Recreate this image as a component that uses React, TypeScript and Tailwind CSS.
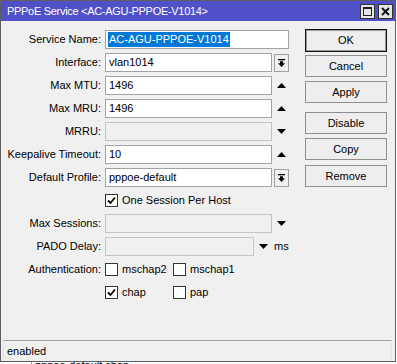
import React from "react";

const font = { fontFamily: '"Liberation Sans", Arial, sans-serif' };

function Up() {
  return (
    <svg width="9" height="5" viewBox="0 0 9 5" className="block">
      <path d="M0 5 L4.5 0 L9 5 Z" fill="#000" />
    </svg>
  );
}
function Down() {
  return (
    <svg width="9" height="5" viewBox="0 0 9 5" className="block">
      <path d="M0 0 L9 0 L4.5 5 Z" fill="#000" />
    </svg>
  );
}

function DropBtn() {
  return (
    <div className="ml-[2px] w-[15px] h-[18px] border border-[#a0a0a0] bg-[#f0f0f0] flex items-center justify-center">
      <svg width="7" height="8" viewBox="0 0 7 8" className="block">
        <rect x="0" y="0" width="7" height="1.3" fill="#000" />
        <path d="M2 2.3 H5 V4.3 H7 L3.5 8 L0 4.3 H2 Z" fill="#000" />
      </svg>
    </div>
  );
}

function Check({ checked }: { checked?: boolean }) {
  return (
    <div className="w-[13px] h-[13px] border border-[#333] bg-white flex items-center justify-center shrink-0">
      {checked && (
        <svg width="9" height="9" viewBox="0 0 9 9" className="block">
          <path d="M1 4.5 L3.5 7 L8 1.5" stroke="#000" strokeWidth="1.8" fill="none" />
        </svg>
      )}
    </div>
  );
}

function Row({ label, children }: { label?: string; children?: React.ReactNode }) {
  return (
    <div className="flex items-center h-[23px]">
      <div className="w-[100px] text-right whitespace-nowrap">{label}</div>
      <div className="ml-[4px] flex items-center">{children}</div>
    </div>
  );
}

function Input({ w, value, disabled, selected }: { w: number; value?: string; disabled?: boolean; selected?: boolean }) {
  const widthCls = w === 184 ? "w-[184px]" : w === 167 ? "w-[167px]" : "w-[149px]";
  return (
    <div
      className={`${widthCls} h-[19px] border flex items-center pl-[2px] whitespace-nowrap overflow-hidden ${
        disabled ? "bg-[#f0f0f0] border-[#c4c4c4]" : "bg-white border-[#a3a3a3]"
      }`}
    >
      {selected ? <span className="bg-[#0078d7] text-white px-[1px] leading-[15px]">{value}</span> : <span className="pl-[1px]">{value}</span>}
    </div>
  );
}

function ArrowSlot({ up, down }: { up?: boolean; down?: boolean }) {
  return (
    <div className="w-[18px] flex items-center justify-center">
      {up && <Up />}
      {down && <Down />}
    </div>
  );
}

function Btn({ label, def, cls }: { label: string; def?: boolean; cls: string }) {
  return (
    <div
      className={`w-[82px] flex items-center justify-center ${cls} ${
        def ? "border border-[#111] shadow-[inset_0_0_0_1px_#9a9a9a]" : "border border-[#8f8f8f]"
      } bg-[#eeeeee]`}
    >
      {label}
    </div>
  );
}

export default function App() {
  return (
    <div className="w-[397px] h-[364px] bg-white overflow-hidden text-[11px] text-black" style={font}>
      <div className="w-[396px] h-[362px] border border-[#5f5f5f] flex flex-col bg-[#f0f0f0]">
        {/* title bar */}
        <div className="h-[20px] bg-[#5050c8] flex items-center justify-between shrink-0">
          <div className="pl-[6px] text-white text-[11px] tracking-[-0.3px] whitespace-nowrap">PPPoE Service &lt;AC-AGU-PPPOE-V1014&gt;</div>
          <div className="flex items-center gap-[3px] pr-[2px]">
            <div className="w-[15px] h-[15px] border border-[#333] bg-[#e6e6e6] flex items-center justify-center">
              <div className="w-[9px] h-[9px] border border-[#222] border-t-2" />
            </div>
            <div className="w-[15px] h-[15px] border border-[#333] bg-[#e6e6e6] flex items-center justify-center">
              <svg width="9" height="9" viewBox="0 0 9 9" className="block">
                <path d="M1 1 L8 8 M8 1 L1 8" stroke="#111" strokeWidth="2" />
              </svg>
            </div>
          </div>
        </div>

        {/* body */}
        <div className="flex-1 flex">
          <div className="pt-[7px] w-[304px]">
            <Row label="Service Name:">
              <Input w={184} value="AC-AGU-PPPOE-V1014" selected />
            </Row>
            <Row label="Interface:">
              <Input w={167} value="vlan1014" />
              <DropBtn />
            </Row>
            <Row label="Max MTU:">
              <Input w={167} value="1496" />
              <ArrowSlot up />
            </Row>
            <Row label="Max MRU:">
              <Input w={167} value="1496" />
              <ArrowSlot up />
            </Row>
            <Row label="MRRU:">
              <Input w={167} disabled />
              <ArrowSlot down />
            </Row>
            <Row label="Keepalive Timeout:">
              <Input w={167} value="10" />
              <ArrowSlot up />
            </Row>
            <Row label="Default Profile:">
              <Input w={167} value="pppoe-default" />
              <DropBtn />
            </Row>
            <Row>
              <Check checked />
              <span className="ml-[4px]">One Session Per Host</span>
            </Row>
            <Row label="Max Sessions:">
              <Input w={167} disabled />
              <ArrowSlot down />
            </Row>
            <Row label="PADO Delay:">
              <Input w={149} disabled />
              <ArrowSlot down />
              <span className="ml-[2px]">ms</span>
            </Row>
            <Row label="Authentication:">
              <div className="w-[68px] flex items-center">
                <Check />
                <span className="ml-[4px]">mschap2</span>
              </div>
              <div className="flex items-center">
                <Check />
                <span className="ml-[4px]">mschap1</span>
              </div>
            </Row>
            <Row>
              <div className="w-[68px] flex items-center">
                <Check checked />
                <span className="ml-[4px]">chap</span>
              </div>
              <div className="flex items-center">
                <Check />
                <span className="ml-[4px]">pap</span>
              </div>
            </Row>
          </div>
          <div className="pt-[8px] flex flex-col">
            <Btn label="OK" def cls="h-[23px]" />
            <Btn label="Cancel" cls="h-[22px] mt-[3px]" />
            <Btn label="Apply" cls="h-[22px] mt-[4px]" />
            <Btn label="Disable" cls="h-[22px] mt-[9px]" />
            <Btn label="Copy" cls="h-[22px] mt-[4px]" />
            <Btn label="Remove" cls="h-[22px] mt-[5px]" />
          </div>
        </div>

        {/* status bar */}
        <div className="mx-[2px] h-[21px] border-t border-[#a0a0a0] border-l border-r border-l-[#e4e4e4] border-r-[#e4e4e4] flex items-center pl-[3px] w-[389px]">
          enabled
        </div>
      </div>
      <div className="h-[2px] overflow-hidden flex">
        <div className="ml-[31px] w-[1px] bg-[#9a9a9a]" />
        <div className="ml-[3px] -mt-[3px] leading-[13px] whitespace-nowrap">pppoe-default chap</div>
      </div>
    </div>
  );
}
